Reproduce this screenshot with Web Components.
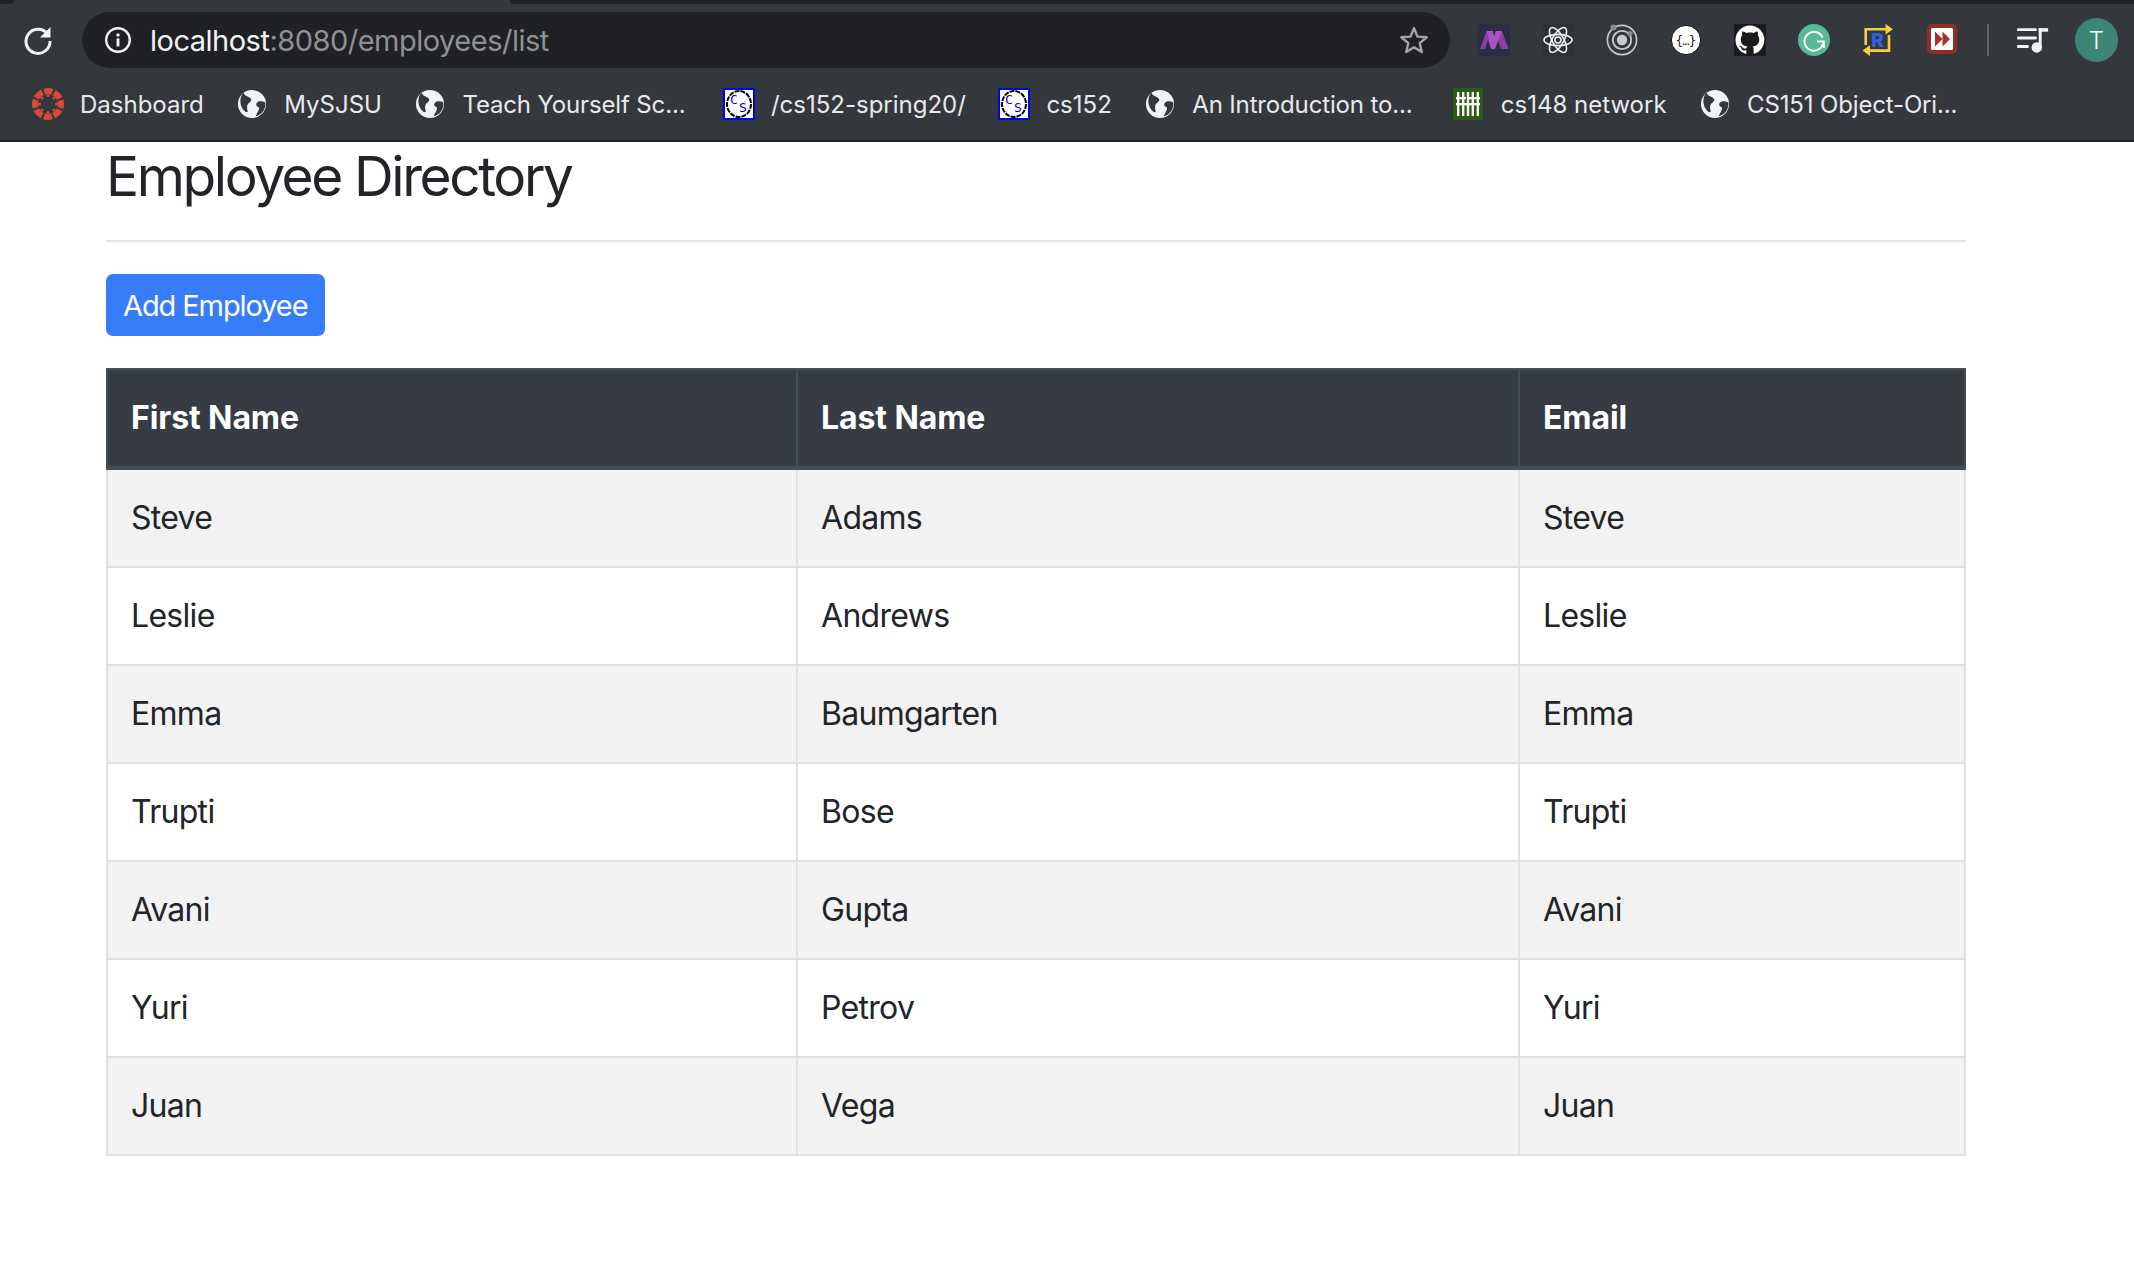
<!DOCTYPE html>
<html>
<head>
<meta charset="utf-8">
<title>Employee Directory</title>
<style>
  html, body { margin: 0; padding: 0; background: #fff; }
  body { font-family: Inter, "Liberation Sans", sans-serif; color: #212529; }
</style>
</head>
<body>
<browser-chrome url-host="localhost" url-path=":8080/employees/list">
  <browser-ext kind="mosaic"></browser-ext>
  <browser-ext kind="react"></browser-ext>
  <browser-ext kind="ionic"></browser-ext>
  <browser-ext kind="json"></browser-ext>
  <browser-ext kind="github"></browser-ext>
  <browser-ext kind="grammarly"></browser-ext>
  <browser-ext kind="redux"></browser-ext>
  <browser-ext kind="skip"></browser-ext>
  <browser-bookmark slot="bookmarks" icon="canvas">Dashboard</browser-bookmark>
  <browser-bookmark slot="bookmarks" icon="globe">MySJSU</browser-bookmark>
  <browser-bookmark slot="bookmarks" icon="globe" truncated>Teach Yourself Sc...</browser-bookmark>
  <browser-bookmark slot="bookmarks" icon="cs">/cs152-spring20/</browser-bookmark>
  <browser-bookmark slot="bookmarks" icon="cs">cs152</browser-bookmark>
  <browser-bookmark slot="bookmarks" icon="globe" truncated>An Introduction to...</browser-bookmark>
  <browser-bookmark slot="bookmarks" icon="net">cs148 network</browser-bookmark>
  <browser-bookmark slot="bookmarks" icon="globe" truncated>CS151 Object-Ori...</browser-bookmark>
</browser-chrome>

<employee-page heading="Employee Directory">
  <employee-button>Add Employee</employee-button>
  <employee-table>
    <employee-row first="Steve" last="Adams" email="Steve"></employee-row>
    <employee-row first="Leslie" last="Andrews" email="Leslie"></employee-row>
    <employee-row first="Emma" last="Baumgarten" email="Emma"></employee-row>
    <employee-row first="Trupti" last="Bose" email="Trupti"></employee-row>
    <employee-row first="Avani" last="Gupta" email="Avani"></employee-row>
    <employee-row first="Yuri" last="Petrov" email="Yuri"></employee-row>
    <employee-row first="Juan" last="Vega" email="Juan"></employee-row>
  </employee-table>
</employee-page>

<script>
const GITHUB_PATH = 'M8 0C3.58 0 0 3.58 0 8c0 3.54 2.29 6.53 5.47 7.59.4.07.55-.17.55-.38 0-.19-.01-.82-.01-1.49-2.01.37-2.53-.49-2.69-.94-.09-.23-.48-.94-.82-1.13-.28-.15-.68-.52-.01-.53.63-.01 1.08.58 1.23.82.72 1.21 1.87.87 2.33.66.07-.52.28-.87.51-1.07-1.78-.2-3.64-.89-3.64-3.95 0-.87.31-1.59.82-2.15-.08-.2-.36-1.02.08-2.12 0 0 .67-.21 2.2.82.64-.18 1.32-.27 2-.27.68 0 1.36.09 2 .27 1.53-1.04 2.2-.82 2.2-.82.44 1.1.16 1.92.08 2.12.51.56.82 1.27.82 2.15 0 3.07-1.87 3.75-3.65 3.95.29.25.54.73.54 1.48 0 1.07-.01 1.93-.01 2.2 0 .21.15.46.55.38A8.013 8.013 0 0016 8c0-4.42-3.58-8-8-8z';

const EXT_ICONS = {
    mosaic: `<rect width="32" height="32" rx="3" fill="#2b2d45"/>
        <path d="M2 25 8.700 7h6l1.600 5.500L17.900 7h6l6.700 18H23l-3.400-9-3.300 9h-3.400l-3-9-2.900 9z" fill="#8d3da3"/>
        <path d="M8.700 7h6l1.600 5.500L17.900 7h6l-7 18h-3.600z" fill="#a952c6"/>`,
    react: `<rect width="32" height="32" rx="3" fill="#2e3135"/>
        <g fill="none" stroke="#f1f3f4" stroke-width="1.6">
          <ellipse cx="16" cy="16" rx="14" ry="5.6"/>
          <ellipse cx="16" cy="16" rx="14" ry="5.6" transform="rotate(60 16 16)"/>
          <ellipse cx="16" cy="16" rx="14" ry="5.6" transform="rotate(120 16 16)"/>
          <circle cx="16" cy="16" r="3"/>
        </g>`,
    ionic: `<g fill="none" stroke="#c9cbcd">
          <circle cx="16" cy="16" r="14.6" stroke-width="1.6"/>
          <circle cx="16" cy="16" r="9.2" stroke-width="1.8"/>
        </g>
        <circle cx="16" cy="16" r="5.2" fill="#c9cbcd"/>
        <circle cx="7.5" cy="3.5" r="3" fill="#8b8e91"/>
        <circle cx="24" cy="9.500" r="2.600" fill="#8b8e91"/>`,
    json: `<circle cx="16" cy="16" r="14.6" fill="#fff" stroke="#111" stroke-width="1"/>
        <text x="5.500" y="20.500" textLength="21" lengthAdjust="spacing" font-family="'DejaVu Sans', sans-serif" font-size="12" fill="#111">{...}</text>`,
    github: `<rect width="32" height="32" fill="#1b1b1b"/>
        <path d="${GITHUB_PATH}" transform="translate(1.500 1.500) scale(1.810)" fill="#fff"/>`,
    grammarly: `<circle cx="16" cy="16" r="16" fill="#58b998"/>
        <path d="M24.500 13.500A9.400 9.400 0 1 0 25 19.500" fill="none" stroke="#fff" stroke-width="2"/>
        <path d="M19 17.500h6.800v6.600" fill="none" stroke="#fff" stroke-width="2"/>`,
    redux: `<g transform="translate(1 1)">
          <g fill="none" stroke="#f6cf3f" stroke-width="2.600">
            <path d="M2.700 20V4.300H23"/>
            <path d="M26 10v15.600H7"/>
          </g>
          <path d="M22.500-1 30 4.300 22.500 9.600zM7 20.300-.5 25.600 7 30.900z" fill="#f6cf3f"/>
          <text x="14.500" y="22" text-anchor="middle" font-family="Inter, sans-serif" font-weight="800" font-size="19" fill="#2b62e3">R</text>
        </g>`,
    skip: `<g transform="translate(1 0)">
          <rect width="30" height="30" rx="5" fill="#8e2f28"/>
          <rect x="4" y="4" width="22" height="22" rx="1.500" fill="#fff"/>
          <path d="M8 7.500 15.500 15 8 22.500zM15.500 7.500 23 15 15.500 22.500z" fill="#a3342b"/>
        </g>`
};

class BrowserExt extends HTMLElement {
    connectedCallback() {
        const kind = this.getAttribute('kind');
        const root = this.attachShadow({mode: 'open'});
        root.innerHTML = `
            <style>
                :host { display: block; width: 32px; height: 32px; }
                svg { display: block; overflow: visible; }
            </style>
            <svg width="32" height="32" viewBox="0 0 32 32">${EXT_ICONS[kind]}</svg>
        `;
    }
}

const BOOKMARK_ICONS = {
    canvas: `<g fill="none" stroke="#d64a38">
          <circle cx="16" cy="16" r="13" stroke-width="6" stroke-dasharray="8.200 2" stroke-dashoffset="4.100"/>
        </g>
        <g fill="#d64a38">
          <circle cx="7.500" cy="16" r="1.500"/><circle cx="24.500" cy="16" r="1.500"/>
          <circle cx="16" cy="7.500" r="1.500"/><circle cx="16" cy="24.500" r="1.500"/>
          <circle cx="10" cy="10" r="1.500"/><circle cx="22" cy="10" r="1.500"/>
          <circle cx="10" cy="22" r="1.500"/><circle cx="22" cy="22" r="1.500"/>
        </g>`,
    globe: `<circle cx="16" cy="16" r="14" fill="#f1f3f4"/>
        <path d="M7.500 4.800C9 9 13 8 15 11c1.300 2-1.500 3.200-3 5-1.500 1.800-1 5-.2 7.500-1.600 2-4.500-1-6.200-4.500C3.500 14 4.200 8 7.500 4.800z" fill="#35393d"/>
        <path d="M29.300 14.500c-2.800-1.600-6.200-1.800-8.300.2-1.600 1.600-.6 3.700 1.200 4.300 1.500.5.8 2.700-.1 4.300-.7 1.400-1.500 2.800-2.500 5 5.300-1 10.600-6.500 9.700-13.800z" fill="#35393d"/>`,
    cs: `<rect x="1" y="1" width="30" height="30" fill="#fff" stroke="#0000f0" stroke-width="2"/>
        <ellipse cx="16" cy="16" rx="12" ry="13" fill="none" stroke="#000" stroke-width="2" stroke-dasharray="5 1"/>
        <text x="11" y="16" text-anchor="middle" font-family="'DejaVu Sans Mono', monospace" font-size="13" fill="#0000e0">C</text>
        <text x="20" y="24" text-anchor="middle" font-family="'DejaVu Sans Mono', monospace" font-size="13" fill="#0000e0">S</text>`,
    net: `<rect x="0" width="30" height="32" fill="#2f5a1c"/>
        <g fill="#f4f6f2">
          <rect x="4" y="4" width="2.400" height="24"/><rect x="9" y="4" width="2.400" height="24"/>
          <rect x="13.800" y="4" width="2.400" height="24"/><rect x="18.600" y="4" width="2.400" height="24"/>
          <rect x="23.600" y="4" width="2.400" height="24"/>
          <rect x="3" y="9" width="10" height="2.400"/><rect x="16" y="9" width="11" height="2.400"/>
          <rect x="3" y="15" width="24" height="2.400"/>
        </g>`
};

class BrowserBookmark extends HTMLElement {
    connectedCallback() {
        const icon = this.getAttribute('icon');
        const root = this.attachShadow({mode: 'open'});
        root.innerHTML = `
            <style>
                :host {
                    display: flex;
                    align-items: center;
                    gap: 16px;
                    font-size: 24px;
                    color: #e8eaed;
                    white-space: nowrap;
                }
                /* chrome caps a bookmark label at a fixed width */
                :host([truncated]) .label { width: 228px; letter-spacing: -0.15px; }
                svg { display: block; flex: none; }
            </style>
            <svg width="32" height="32" viewBox="0 0 32 32">${BOOKMARK_ICONS[icon]}</svg>
            <div class="label"><slot></slot></div>
        `;
    }
}

class BrowserChrome extends HTMLElement {
    connectedCallback() {
        const host = this.getAttribute('url-host');
        const path = this.getAttribute('url-path');
        const root = this.attachShadow({mode: 'open'});
        root.innerHTML = `
            <style>
                :host {
                    display: block;
                    background: #34383c;
                    border-bottom: 2px solid #202124;
                    font-family: Inter, "Liberation Sans", sans-serif;
                }
                .tabs { display: flex; height: 4px; }
                .tabs .gap { width: 14px; background: #202124; border-bottom-right-radius: 4px; }
                .tabs .active { width: 496px; }
                .tabs .rest { flex: 1; background: #202124; border-bottom-left-radius: 4px; }
                .toolbar {
                    display: flex;
                    align-items: center;
                    height: 56px;
                    margin-top: 8px;
                    padding-right: 16px;
                }
                .reload { flex: none; width: 82px; display: flex; justify-content: center; padding-right: 6px; box-sizing: border-box; }
                .omnibox {
                    flex: none;
                    box-sizing: border-box;
                    width: 1368px;
                    height: 56px;
                    border-radius: 28px;
                    background: #202124;
                    display: flex;
                    align-items: center;
                    padding: 0 21px 0 22px;
                    font-size: 29px;
                    letter-spacing: -0.5px;
                    color: #8f9194;
                }
                .omnibox .url { margin-left: 18px; flex: 1; white-space: nowrap; }
                .omnibox b { font-weight: 400; color: #f1f3f4; }
                .exts { display: flex; gap: 32px; margin-left: 28px; }
                .sep { width: 2px; height: 32px; background: #5f6368; margin-left: 29px; }
                .queue { margin-left: 28px; display: block; }
                .avatar {
                    width: 44px;
                    height: 44px;
                    margin-left: 26px;
                    border-radius: 50%;
                    background: #3d8577;
                    color: #fff;
                    font-size: 24px;
                    font-weight: 300;
                    display: flex;
                    align-items: center;
                    justify-content: center;
                }
                .bookmarks {
                    display: flex;
                    align-items: center;
                    gap: 32.5px;
                    height: 72px;
                    padding-left: 32px;
                }
            </style>
            <div class="tabs"><div class="gap"></div><div class="active"></div><div class="rest"></div></div>
            <div class="toolbar">
                <div class="reload">
                    <svg width="30" height="30" viewBox="0 0 30 30">
                        <path d="M24.500 9A12 12 0 1 0 27 16" fill="none" stroke="#f1f3f4" stroke-width="3"/>
                        <path d="M27.500 2v10.500H17z" fill="#f1f3f4"/>
                    </svg>
                </div>
                <div class="omnibox">
                    <svg width="28" height="28" viewBox="0 0 28 28">
                        <circle cx="14" cy="14" r="11.800" fill="none" stroke="#f1f3f4" stroke-width="2.400"/>
                        <rect x="12.600" y="12.400" width="2.800" height="8" fill="#f1f3f4"/>
                        <circle cx="14" cy="9" r="1.700" fill="#f1f3f4"/>
                    </svg>
                    <div class="url"><b>${host}</b>${path}</div>
                    <svg width="30" height="30" viewBox="0 0 30 30">
                        <path d="M15 3.200 18.500 11.600 27.600 12.300 20.700 18.200 22.800 27 15 22.300 7.200 27 9.300 18.200 2.400 12.300 11.500 11.600z" fill="none" stroke="#a4a6a8" stroke-width="2.400" stroke-linejoin="round"/>
                    </svg>
                </div>
                <div class="exts"><slot></slot></div>
                <div class="sep"></div>
                <svg class="queue" width="32" height="26" viewBox="0 0 32 26">
                    <g fill="#f1f3f4">
                        <rect x="0" y="1" width="20" height="3" rx="1"/>
                        <rect x="0" y="9.500" width="20" height="3" rx="1"/>
                        <rect x="0" y="18" width="12" height="3" rx="1"/>
                        <rect x="22" y="1" width="3" height="20"/>
                        <path d="M22 1h9.500v3.600H22z"/>
                        <circle cx="20" cy="20.500" r="5.300"/>
                    </g>
                </svg>
                <div class="avatar">T</div>
            </div>
            <div class="bookmarks"><slot name="bookmarks"></slot></div>
        `;
    }
}

class EmployeePage extends HTMLElement {
    connectedCallback() {
        const root = this.attachShadow({mode: 'open'});
        root.innerHTML = `
            <style>
                :host {
                    display: block;
                    box-sizing: border-box;
                    width: 1860px;
                    margin-left: 106px;
                    padding-bottom: 100px;
                    font-family: Inter, "Liberation Sans", sans-serif;
                    color: #212529;
                }
                h3 {
                    margin: 0;
                    font-size: 55px;
                    font-weight: 400;
                    letter-spacing: -2.400px;
                    line-height: 69px;
                }
                hr {
                    height: 2px;
                    margin: 29px 0 32px;
                    border: 0;
                    background: #e5e5e5;
                }
                .stack { display: flex; flex-direction: column; align-items: flex-start; gap: 32px; }
            </style>
            <h3>${this.getAttribute('heading')}</h3>
            <hr>
            <div class="stack"><slot></slot></div>
        `;
    }
}

class EmployeeButton extends HTMLElement {
    constructor() {
        super();
        const root = this.attachShadow({mode: 'open'});
        root.innerHTML = `
            <style>
                :host {
                    display: block;
                    box-sizing: border-box;
                    height: 62px;
                    padding: 0 18px 0 17px;
                    border-radius: 7px;
                    background: #377dfb;
                    color: #fff;
                    font-size: 29px;
                    letter-spacing: -1.100px;
                    line-height: 64px;
                }
            </style>
            <slot></slot>
        `;
    }
}

// shared column widths so header and rows line up
const COLUMNS = '690px 722px 1fr';

class EmployeeTable extends HTMLElement {
    constructor() {
        super();
        const root = this.attachShadow({mode: 'open'});
        root.innerHTML = `
            <style>
                :host { display: block; width: 100%; box-sizing: border-box; }
                .head {
                    display: grid;
                    grid-template-columns: ${COLUMNS};
                    background: #373b44;
                    border: 2px solid #454d55;
                    border-bottom-width: 4px;
                    border-right: 0;
                    color: #fff;
                    font-size: 32px;
                    font-weight: 700;
                    letter-spacing: -0.100px;
                    line-height: 48px;
                }
                .head div { padding: 24px 24px 24px 23px; border-right: 2px solid #454d55; }
            </style>
            <div class="head">
                <div>First Name</div><div>Last Name</div><div>Email</div>
            </div>
            <slot></slot>
        `;
    }
}

class EmployeeRow extends HTMLElement {
    connectedCallback() {
        const cells = ['first', 'last', 'email']
            .map(name => `<div>${this.getAttribute(name)}</div>`)
            .join('');
        const root = this.attachShadow({mode: 'open'});
        root.innerHTML = `
            <style>
                :host {
                    display: grid;
                    grid-template-columns: ${COLUMNS};
                    border-left: 2px solid #dee2e6;
                    border-bottom: 2px solid #dee2e6;
                    font-size: 32px;
                    letter-spacing: -0.700px;
                    line-height: 48px;
                }
                :host(:nth-child(odd)) { background: #f2f2f2; }
                div { padding: 24px 24px 24px 23px; border-right: 2px solid #dee2e6; }
            </style>
            ${cells}
        `;
    }
}

customElements.define('browser-ext', BrowserExt);
customElements.define('browser-bookmark', BrowserBookmark);
customElements.define('browser-chrome', BrowserChrome);
customElements.define('employee-page', EmployeePage);
customElements.define('employee-button', EmployeeButton);
customElements.define('employee-table', EmployeeTable);
customElements.define('employee-row', EmployeeRow);
</script>
</body>
</html>
